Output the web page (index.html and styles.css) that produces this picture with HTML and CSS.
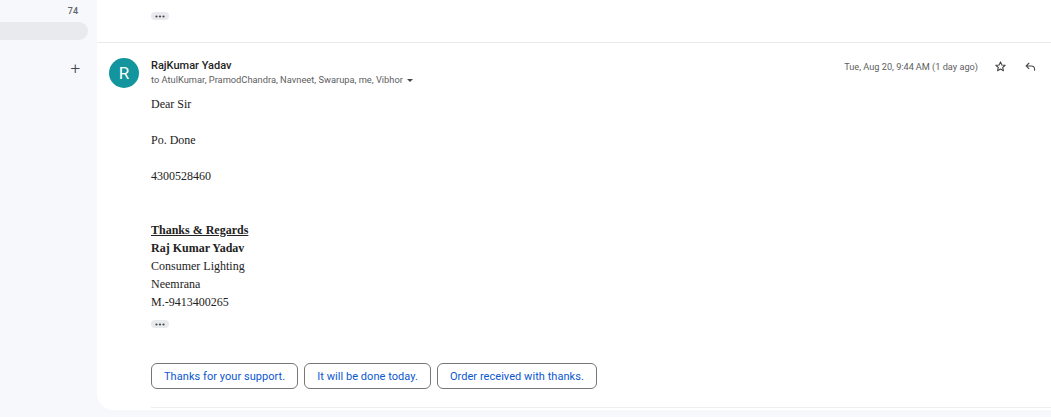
FILE: index.html
```html
<!DOCTYPE html>
<html>
<head>
<meta charset="utf-8">
<link rel="stylesheet" href="styles.css">
</head>
<body>
<aside class="sidebar">
  <div class="count-row"><span class="count">74</span></div>
  <div class="pill"></div>
  <div class="plus-row"><span class="plus">+</span></div>
</aside>
<main class="panel">
  <div class="collapsed">
    <span class="dots"><svg width="10" height="3" viewBox="0 0 10 3"><circle cx="1.5" cy="1.5" r="1.1" fill="#444746"/><circle cx="5" cy="1.5" r="1.1" fill="#444746"/><circle cx="8.5" cy="1.5" r="1.1" fill="#444746"/></svg></span>
  </div>
  <div class="message">
    <div class="avatar">R</div>
    <div class="content">
      <div class="header">
        <div class="who">
          <div class="name">RajKumar Yadav</div>
          <div class="to">to AtulKumar, PramodChandra, Navneet, Swarupa, me, Vibhor <span class="caret"></span></div>
        </div>
        <div class="meta">
          <span class="date">Tue, Aug 20, 9:44&#8201;AM (1 day ago)</span>
          <svg class="icon star" width="13" height="13" viewBox="0 0 24 24"><path d="M12 3.5l2.5 5.6 6.1.6-4.6 4.1 1.4 6-5.4-3.2-5.4 3.2 1.4-6-4.6-4.1 6.1-.6z" fill="none" stroke="#444746" stroke-width="2" stroke-linejoin="round"/></svg>
          <svg class="icon reply" width="13" height="13" viewBox="0 0 24 24"><path d="M9 6L4 11l5 5M4 11h9.5a6 6 0 0 1 6 6v2" fill="none" stroke="#444746" stroke-width="2" stroke-linecap="round" stroke-linejoin="round"/></svg>
        </div>
      </div>
      <div class="body">
        <p>Dear Sir</p>
        <p>&nbsp;</p>
        <p>Po. Done</p>
        <p>&nbsp;</p>
        <p>4300528460</p>
        <p>&nbsp;</p>
        <p>&nbsp;</p>
        <p><b><u>Thanks &amp; Regards</u></b></p>
        <p><b>Raj Kumar Yadav</b></p>
        <p>Consumer Lighting</p>
        <p>Neemrana</p>
        <p>M.-9413400265</p>
      </div>
      <div class="more">
        <span class="dots"><svg width="10" height="3" viewBox="0 0 10 3"><circle cx="1.5" cy="1.5" r="1.1" fill="#444746"/><circle cx="5" cy="1.5" r="1.1" fill="#444746"/><circle cx="8.5" cy="1.5" r="1.1" fill="#444746"/></svg></span>
      </div>
      <div class="replies">
        <button class="chip">Thanks for your support.</button>
        <button class="chip">It will be done today.</button>
        <button class="chip">Order received with thanks.</button>
      </div>
      <div class="bottom-rule"></div>
    </div>
  </div>
</main>
</body>
</html>
```

FILE: styles.css
```css
html, body {
  margin: 0;
  padding: 0;
}
body {
  width: 1051px;
  height: 417px;
  background: #f6f8fc;
  display: flex;
  align-items: flex-start;
  overflow: hidden;
  font-family: Roboto, "Liberation Sans", Arial, sans-serif;
}
.sidebar {
  width: 97px;
  flex: none;
  display: flex;
  flex-direction: column;
}
.count-row {
  height: 22px;
  display: flex;
  justify-content: flex-end;
  align-items: center;
  padding-right: 19px;
}
.count {
  font-size: 9px;
  color: #5f6368;
  font-weight: 500;
}
.pill {
  width: 88px;
  height: 18px;
  background: #e9eaee;
  border-radius: 0 9px 9px 0;
}
.plus-row {
  height: 60px;
  display: flex;
  justify-content: flex-end;
  align-items: flex-start;
  padding-right: 17px;
}
.plus {
  margin-top: 18px;
  font-size: 17px;
  font-weight: 300;
  color: #444746;
  line-height: 20px;
}
.panel {
  flex: 1;
  height: 410px;
  background: #fff;
  border-bottom-left-radius: 16px;
  display: flex;
  flex-direction: column;
}
.collapsed {
  height: 43px;
  box-sizing: border-box;
  border-bottom: 1px solid #e8eaed;
  padding: 12px 0 0 54px;
  display: flex;
  align-items: flex-start;
}
.dots {
  display: flex;
  align-items: center;
  justify-content: center;
  width: 18px;
  height: 8px;
  border-radius: 4px;
  background: #e8eaed;
}
.dots svg {
  display: block;
}
.message {
  display: flex;
  padding: 15px 0 0 12px;
}
.avatar {
  width: 30px;
  height: 30px;
  border-radius: 50%;
  background: #12959c;
  color: #fff;
  font-size: 17px;
  display: flex;
  align-items: center;
  justify-content: center;
  flex: none;
  margin-right: 12px;
}
.content {
  flex: 1;
  display: flex;
  flex-direction: column;
}
.header {
  display: flex;
  justify-content: space-between;
  align-items: flex-start;
}
.name {
  font-size: 11px;
  font-weight: 500;
  color: #1f1f1f;
  line-height: 14px;
  padding-top: 1px;
}
.to {
  font-size: 9.3px;
  color: #5e5e5e;
  line-height: 14px;
}
.caret {
  display: inline-block;
  width: 0;
  height: 0;
  border-left: 3.5px solid transparent;
  border-right: 3.5px solid transparent;
  border-top: 3.5px solid #444746;
  margin-left: 2px;
  vertical-align: middle;
}
.meta {
  display: flex;
  align-items: center;
  padding-top: 1px;
  padding-right: 14px;
}
.date {
  font-size: 9.2px;
  color: #5e5e5e;
  margin-right: 16px;
}
.icon {
  display: block;
  margin-top: 1px;
}
.star {
  margin-right: 17px;
}
.body {
  margin-top: 8px;
  font-family: "Liberation Serif", "Times New Roman", serif;
  font-size: 12px;
  color: #222;
  line-height: 18px;
}
.body p {
  margin: 0;
}
.more {
  margin-top: 9px;
  display: flex;
}
.replies {
  display: flex;
  gap: 6px;
  margin-top: 35px;
}
.chip {
  height: 26px;
  box-sizing: border-box;
  border: 1px solid #747775;
  border-radius: 6px;
  background: #fff;
  color: #0b57d0;
  font-family: Roboto, "Liberation Sans", Arial, sans-serif;
  font-size: 11px;
  padding: 0 12px;
  letter-spacing: 0.05px;
}
.bottom-rule {
  margin-top: 18px;
  height: 1px;
  background: #eceef1;
}
```
